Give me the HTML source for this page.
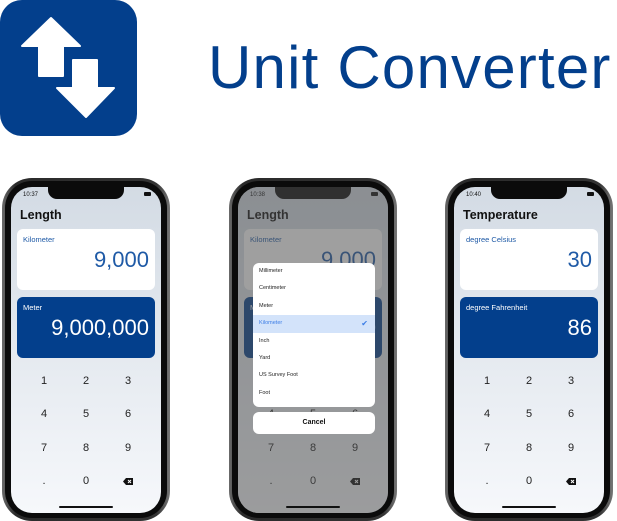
<!DOCTYPE html>
<html><head><meta charset="utf-8"><style>
*{margin:0;padding:0;box-sizing:border-box}
body{width:617px;height:521px;background:#fff;position:relative;overflow:hidden;font-family:"Liberation Sans",Arial,sans-serif}
.abs{position:absolute}
.title{position:absolute;left:208px;top:33px;font-size:60px;color:#033f8c;letter-spacing:1.2px;font-weight:400}
.phone{position:absolute;top:178px;width:168px;height:343px;border-radius:30px;background:linear-gradient(90deg,#6a6a6a,#2a2a2a 8%,#333 92%,#777);}
.phone .in{position:absolute;left:3px;top:3px;right:3px;bottom:3px;border-radius:27px;background:#0b0b0b}
.scr{position:absolute;left:9px;top:9px;width:150px;height:326px;border-radius:21px;overflow:hidden;background:linear-gradient(#d3dbe4,#f6f8fb)}
.notch{position:absolute;left:37px;top:0;width:76px;height:12px;background:#0b0b0b;border-radius:0 0 9px 9px}
.time{position:absolute;left:12px;top:5px;font-size:6px;color:#111}
.st{position:absolute;right:10px;top:5px;width:14px;height:4px;}
.st:after{content:"";position:absolute;right:0;top:0;width:7px;height:4px;background:#111;border-radius:1px}
.h{position:absolute;left:9px;top:21px;font-size:12.5px;font-weight:bold;color:#111}
.card{position:absolute;left:6px;width:138px;height:61px;border-radius:6px}
.c1{top:42px;background:#fff;color:#1f5aa6}
.c2{top:110px;background:#033f8c;color:#fff}
.lab{position:absolute;left:6px;top:6px;font-size:7.5px}
.val{position:absolute;right:6px;top:18px;font-size:22px}
.k{position:absolute;width:30px;text-align:center;font-size:11px;color:#222}
.home{position:absolute;left:48px;bottom:5px;width:54px;height:2px;background:#111;border-radius:1px}
.dim{position:absolute;inset:0;background:rgba(80,80,80,.55)}
.menu{position:absolute;left:15px;top:76px;width:122px;height:144px;background:#fff;border-radius:6px;overflow:hidden}
.mi{height:17.4px;line-height:17.4px;padding-left:6px;font-size:5.5px;color:#222}
.sel{background:#d3e3fa;color:#3d7ee6;position:relative}
.cancel{position:absolute;left:15px;top:225px;width:122px;height:22px;background:#fff;border-radius:6px;text-align:center;line-height:22px;font-size:7px;font-weight:bold;color:#111}
</style></head><body>
<svg class="abs" style="left:0;top:0" width="137" height="137" viewBox="0 0 137 137">
<rect width="137" height="136" rx="22" fill="#033f8c"/>
<path d="M51 18 L80 46 L63 46 L63 76 L39 76 L39 46 L22 46 Z" fill="#fff" stroke="#fff" stroke-width="2" stroke-linejoin="round"/>
<path d="M73 60 L97 60 L97 88 L114 88 L86 117 L57 88 L73 88 Z" fill="#fff" stroke="#fff" stroke-width="2" stroke-linejoin="round"/>
</svg>
<div class="title">Unit Converter</div>

<!-- phone 1 -->
<div class="phone" style="left:2px"><div class="in"></div><div class="scr">
<div class="notch"></div><div class="time">10:37</div><div class="st"></div>
<div class="h">Length</div>
<div class="card c1"><div class="lab">Kilometer</div><div class="val">9,000</div></div>
<div class="card c2"><div class="lab">Meter</div><div class="val">9,000,000</div></div>
<div class="k" style="left:18px;top:188px">1</div><div class="k" style="left:60px;top:188px">2</div><div class="k" style="left:102px;top:188px">3</div>
<div class="k" style="left:18px;top:221px">4</div><div class="k" style="left:60px;top:221px">5</div><div class="k" style="left:102px;top:221px">6</div>
<div class="k" style="left:18px;top:255px">7</div><div class="k" style="left:60px;top:255px">8</div><div class="k" style="left:102px;top:255px">9</div>
<div class="k" style="left:18px;top:288px">.</div><div class="k" style="left:60px;top:288px">0</div><svg class="abs" style="left:112px;top:291px" width="10" height="7" viewBox="0 0 10 7"><path d="M3 0H10V7H3L0 3.5Z" fill="#111"/><path d="M5 2L8 5M8 2L5 5" stroke="#fff" stroke-width="1"/></svg>
<div class="home"></div>
</div></div>

<!-- phone 2 -->
<div class="phone" style="left:229px"><div class="in"></div><div class="scr">
<div class="notch"></div><div class="time">10:38</div><div class="st"></div>
<div class="h">Length</div>
<div class="card c1"><div class="lab">Kilometer</div><div class="val">9,000</div></div>
<div class="card c2"><div class="lab">Meter</div><div class="val">9,000,000</div></div>
<div class="k" style="left:18px;top:188px">1</div><div class="k" style="left:60px;top:188px">2</div><div class="k" style="left:102px;top:188px">3</div>
<div class="k" style="left:18px;top:221px">4</div><div class="k" style="left:60px;top:221px">5</div><div class="k" style="left:102px;top:221px">6</div>
<div class="k" style="left:18px;top:255px">7</div><div class="k" style="left:60px;top:255px">8</div><div class="k" style="left:102px;top:255px">9</div>
<div class="k" style="left:18px;top:288px">.</div><div class="k" style="left:60px;top:288px">0</div><svg class="abs" style="left:112px;top:291px" width="10" height="7" viewBox="0 0 10 7"><path d="M3 0H10V7H3L0 3.5Z" fill="#111"/><path d="M5 2L8 5M8 2L5 5" stroke="#fff" stroke-width="1"/></svg>
<div class="dim"></div>
<div class="menu">
<div class="mi">Millimeter</div><div class="mi">Centimeter</div><div class="mi">Meter</div>
<div class="mi sel">Kilometer<span style="position:absolute;right:7px;font-size:8px">✔</span></div>
<div class="mi">Inch</div><div class="mi">Yard</div><div class="mi">US Survey Foot</div><div class="mi">Foot</div>
</div>
<div class="cancel">Cancel</div>
<div class="home"></div>
</div></div>

<!-- phone 3 -->
<div class="phone" style="left:445px"><div class="in"></div><div class="scr">
<div class="notch"></div><div class="time">10:40</div><div class="st"></div>
<div class="h">Temperature</div>
<div class="card c1"><div class="lab">degree Celsius</div><div class="val">30</div></div>
<div class="card c2"><div class="lab">degree Fahrenheit</div><div class="val">86</div></div>
<div class="k" style="left:18px;top:188px">1</div><div class="k" style="left:60px;top:188px">2</div><div class="k" style="left:102px;top:188px">3</div>
<div class="k" style="left:18px;top:221px">4</div><div class="k" style="left:60px;top:221px">5</div><div class="k" style="left:102px;top:221px">6</div>
<div class="k" style="left:18px;top:255px">7</div><div class="k" style="left:60px;top:255px">8</div><div class="k" style="left:102px;top:255px">9</div>
<div class="k" style="left:18px;top:288px">.</div><div class="k" style="left:60px;top:288px">0</div><svg class="abs" style="left:112px;top:291px" width="10" height="7" viewBox="0 0 10 7"><path d="M3 0H10V7H3L0 3.5Z" fill="#111"/><path d="M5 2L8 5M8 2L5 5" stroke="#fff" stroke-width="1"/></svg>
<div class="home"></div>
</div></div>
</body></html>
